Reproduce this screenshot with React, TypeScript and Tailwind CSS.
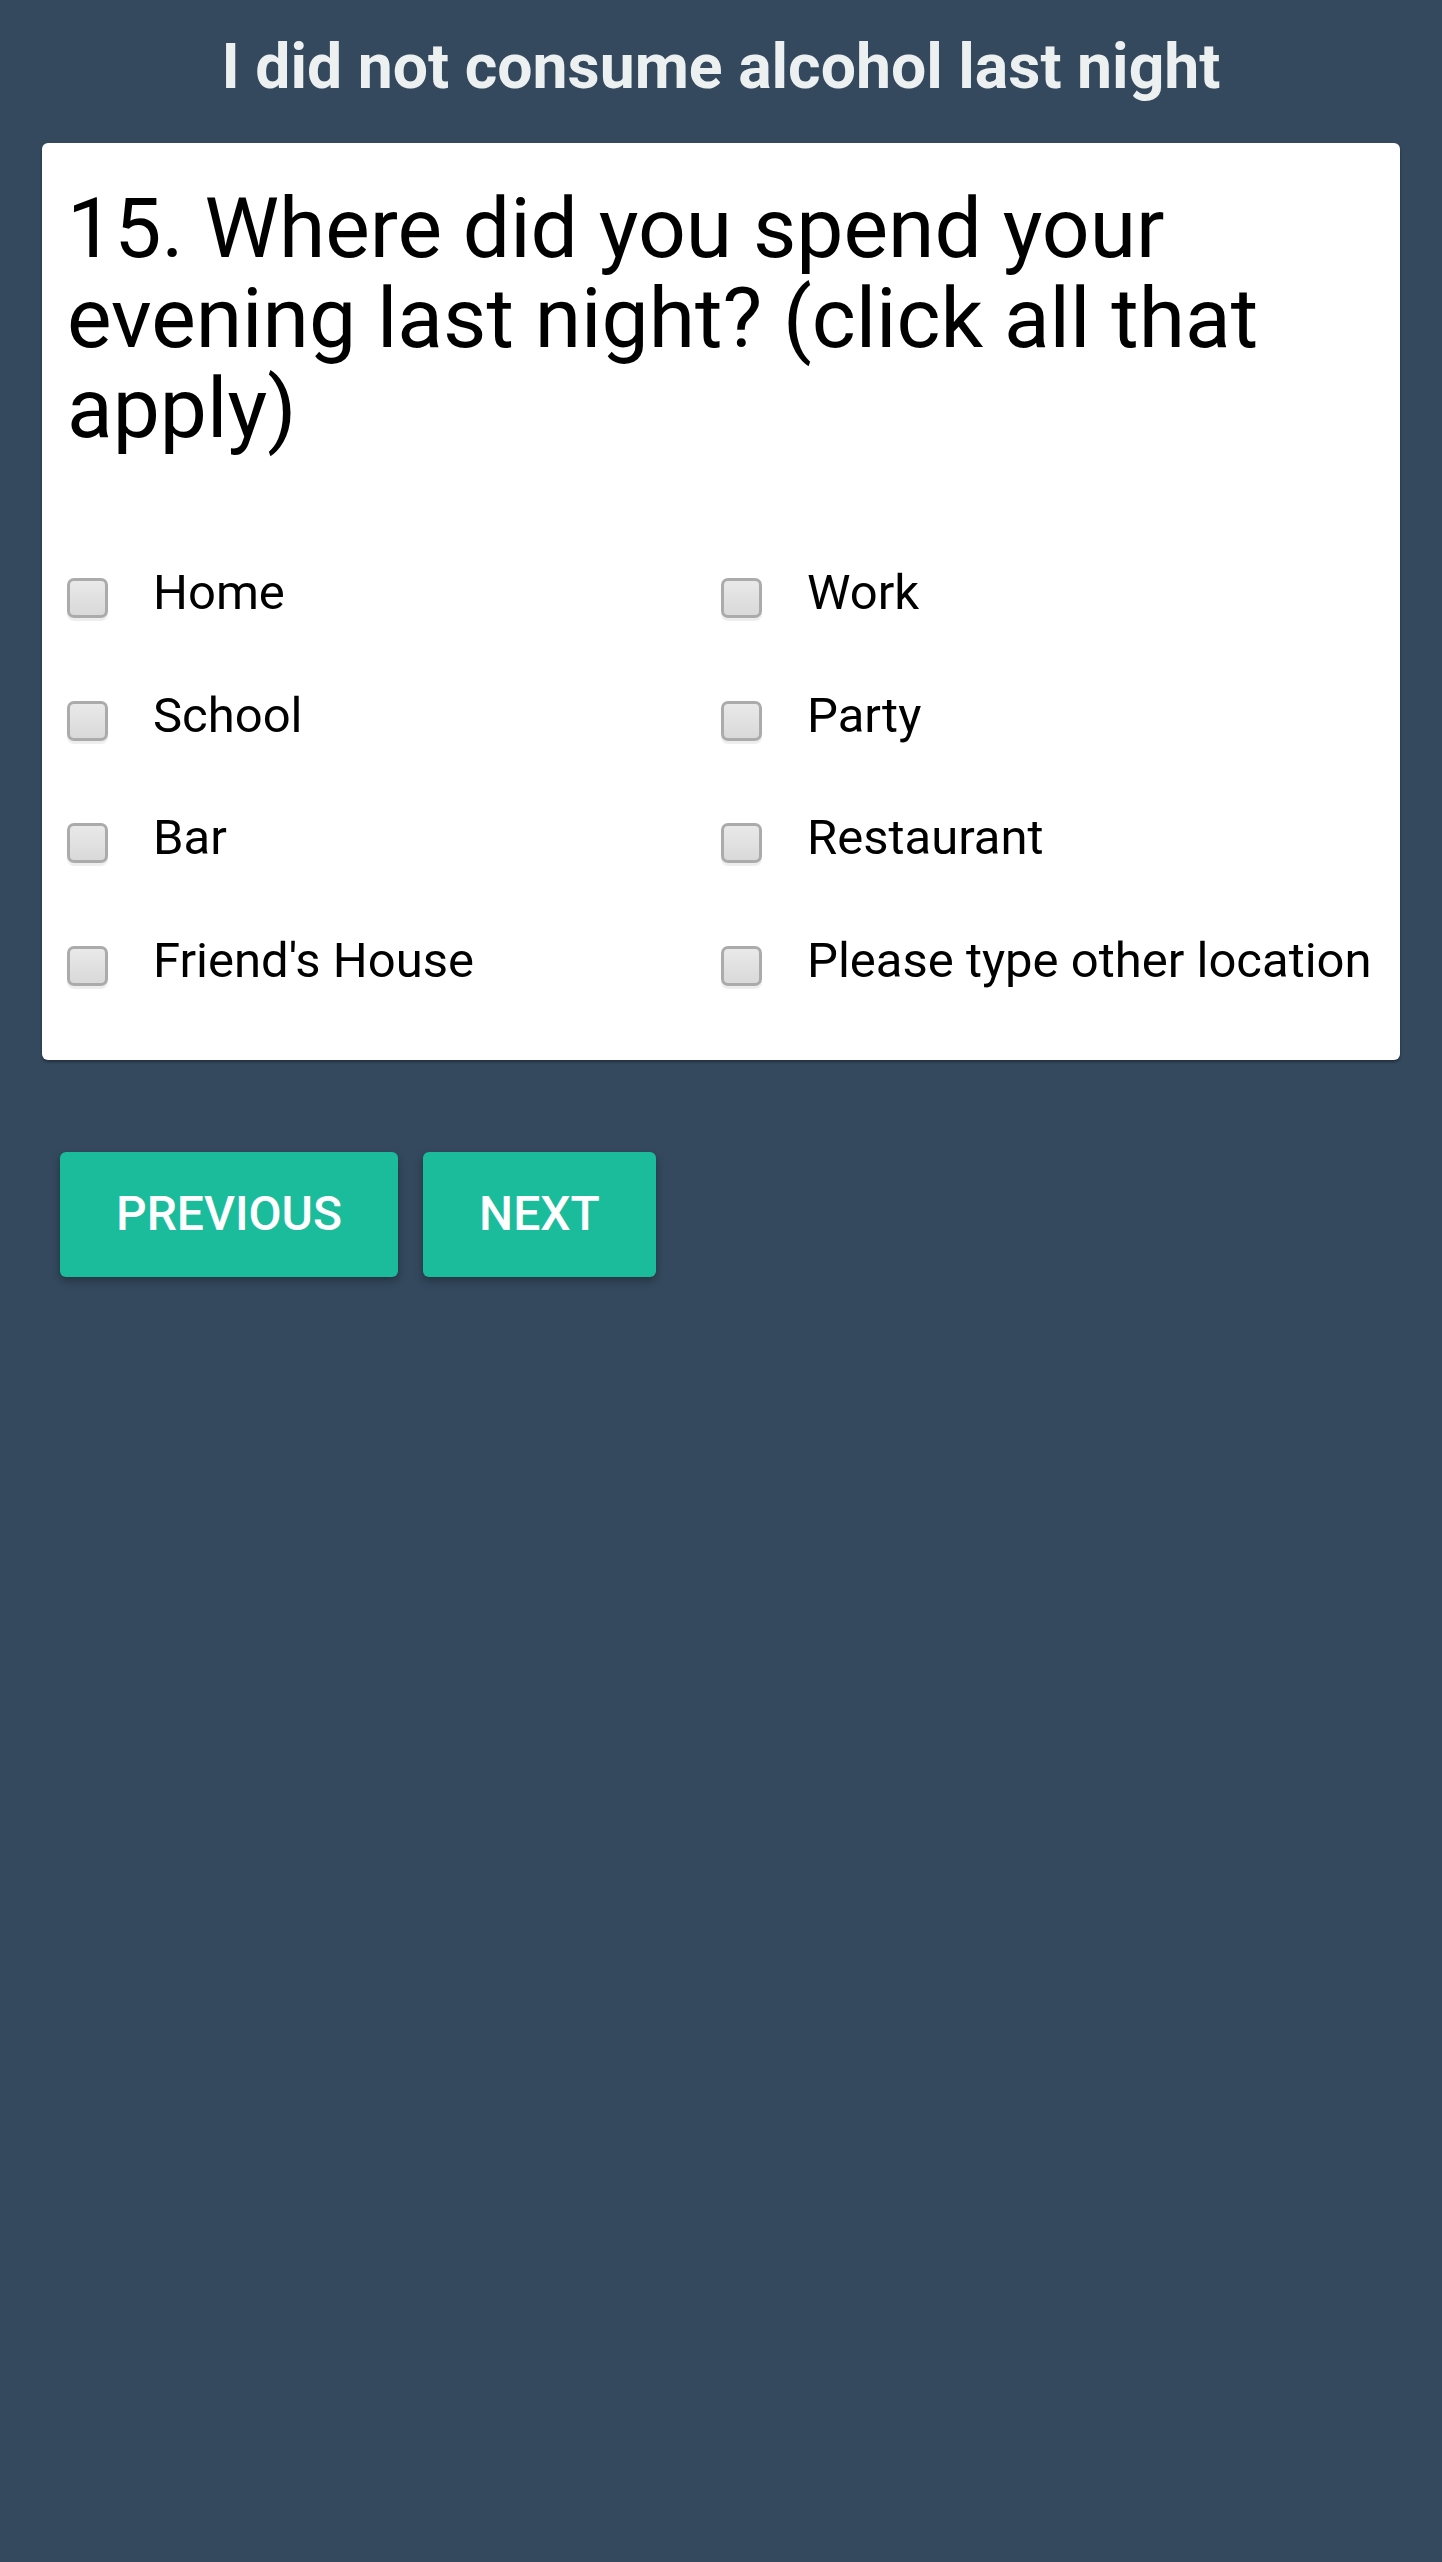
import { useState } from 'react'

const locations = [
  'Home',
  'Work',
  'School',
  'Party',
  'Bar',
  'Restaurant',
  "Friend's House",
  'Please type other location',
]

function CheckRow({ label, checked, onToggle }: { label: string; checked: boolean; onToggle: () => void }) {
  return (
    <label className="flex items-start h-[60px] cursor-pointer">
      <span
        onClick={onToggle}
        className={
          'mt-[15px] w-[41px] h-[40px] shrink-0 rounded-[7px] border-[3px] border-[#ababab] bg-gradient-to-b shadow-[0_3px_1px_rgba(0,0,0,0.07)] ' +
          (checked ? 'from-[#1abc9c] to-[#16a085]' : 'from-[#e9e9e9] to-[#d9d9d9]')
        }
      />
      <span className="ml-[45px] text-[49px] leading-[60px] text-black whitespace-nowrap">{label}</span>
    </label>
  )
}

function App() {
  const [picked, setPicked] = useState<string[]>([])

  const toggle = (name: string) => {
    setPicked((prev) => (prev.includes(name) ? prev.filter((p) => p !== name) : [...prev, name]))
  }

  return (
    <div className="min-h-screen bg-[#34495e] font-['Roboto','Liberation_Sans',sans-serif]">
      <div className="h-[143px] flex items-center justify-center pb-[10px]">
        <h1 className="text-[62.5px] leading-[70px] font-bold text-[#ecf0f1]">I did not consume alcohol last night</h1>
      </div>

      <div className="mx-[42px] bg-white rounded-[6px] shadow-[0_2px_3px_rgba(0,0,0,0.35)] px-[25px] pt-[41px] pb-[69px]">
        <h2 className="text-[84px] leading-[90px] text-black pr-[40px]">
          15. Where did you spend your evening last night? (click all that apply)
        </h2>

        <div className="mt-[109px] grid grid-cols-2 gap-y-[62.67px]">
          {locations.map((loc) => (
            <CheckRow key={loc} label={loc} checked={picked.includes(loc)} onToggle={() => toggle(loc)} />
          ))}
        </div>
      </div>

      <div className="mt-[92px] ml-[60px] flex gap-[25px]">
        <button className="h-[125px] px-[56px] bg-[#1abc9c] rounded-[6px] text-white text-[48px] font-medium uppercase shadow-[0_4px_8px_rgba(0,0,0,0.3)]">
          Previous
        </button>
        <button className="h-[125px] px-[56px] bg-[#1abc9c] rounded-[6px] text-white text-[48px] font-medium uppercase shadow-[0_4px_8px_rgba(0,0,0,0.3)]">
          Next
        </button>
      </div>
    </div>
  )
}

export default App
